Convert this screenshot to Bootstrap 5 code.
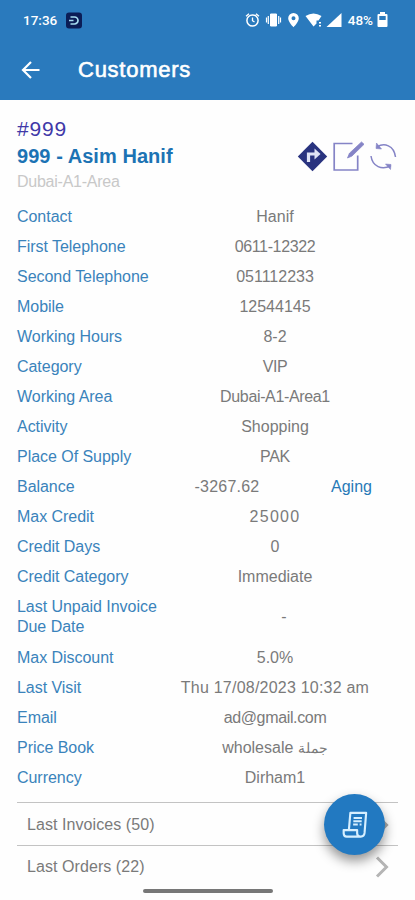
<!DOCTYPE html>
<html lang="en">
<head>
<meta charset="utf-8">
<meta name="viewport" content="width=device-width, initial-scale=1">
<title>Customers</title>
<link href="https://cdn.jsdelivr.net/npm/bootstrap@5.3.0/dist/css/bootstrap.min.css" rel="stylesheet">
<style>
body{font-family:"Liberation Sans",Arial,sans-serif;font-size:16px;color:#7a7a7a;background:#fefefe}
.screen{width:415px;height:900px}
.top{background:#2a7abd;height:100px}
.status{height:40px;font:500 13.5px/40px Roboto,sans-serif;padding:0 27px 0 23px}
.app-title{font-size:22px;line-height:60px;letter-spacing:.75px;-webkit-text-stroke:.6px #fff;margin-left:37px}
.toolbar{height:60px;padding-left:21px}
.head{height:101.6px;padding:16.5px 17px 0}
.num{font-size:21px;line-height:24px;letter-spacing:.8px;color:#4038a8}
.who{font-size:20px;line-height:30px;color:#1c73b4;letter-spacing:.05px}
.area{color:#c8c8c8;line-height:21px;letter-spacing:-.25px}
.actions{padding-top:24px;gap:5px;margin-right:1px}
.line{height:30.05px;padding-left:17px}
.line.tall{height:50.5px;line-height:20.5px}
.key{width:153px;color:#3a83bb;letter-spacing:-.04px}
.val{width:210px}
.wide{letter-spacing:1.3px}
.loose{letter-spacing:.22px}
.tight{letter-spacing:-.35px}
.val.bal{width:114px}
.aging{width:108px;color:#2779b7}
.val.none{width:228px}
.lists{padding-top:9.5px}
.more{border-top:1px solid #c3c3c3;height:42.3px;margin:0 17px;padding:1px 0 0 10px;letter-spacing:.07px}
.fab{left:324px;top:794px;width:61px;height:61px;background:#2279c1;box-shadow:0 6px 12px rgba(0,0,0,.42)}
.pill{left:143px;top:889px;width:130px;height:4px;background:#777}
.chev-under{margin-right:9px}
</style>
<script src="https://cdn.jsdelivr.net/npm/bootstrap@5.3.0/dist/js/bootstrap.bundle.min.js"></script>
</head>
<body>
<div class="screen position-relative overflow-hidden">
<header class="top text-white">
  <div class="status d-flex align-items-center">
    <span>17:36</span>
    <svg class="ms-2" width="17" height="17" viewBox="0 0 17 17"><rect x="1" y=".5" width="16" height="16" rx="3" fill="#0b1d56"/><path d="M4 8.500h4.500M5.500 5h4a3.500 3.500 0 0 1 0 7h-4" fill="none" stroke="#a6dcef" stroke-width="1.700"/></svg>
    <svg class="ms-auto" width="102" height="18" viewBox="0 0 102 18" fill="none" stroke="#fff">
      <circle cx="10.500" cy="9.500" r="5.600" stroke-width="1.500"/><path d="M10.500 6.500v3.200l2 1.300M4 5.200l3-2.500M17 5.200l-3-2.500" stroke-width="1.300"/>
      <path d="M28.500 3h6v12h-6z" fill="#fff"/><path d="M26.300 5v8M36.700 5v8M24.500 6.500v5M38.500 6.500v5" stroke-width="1.200"/>
      <path fill="#fff" fill-rule="evenodd" stroke="none" d="M51.500 2a5.300 5.300 0 0 0-5.300 5.300c0 3.700 5.300 9 5.300 9s5.300-5.300 5.300-9A5.300 5.300 0 0 0 51.500 2m0 3.200a2 2 0 1 1 0 4 2 2 0 0 1 0-4"/>
      <path fill="#fff" stroke="none" d="M63.500 5q8-5 16 0l-3 4.500h-2v3l-3 3z"/><path d="M78 11v1.500M78 14v1.500" stroke-width="2"/>
      <path fill="#fff" stroke="none" d="M99.500 2v14h-15z"/>
    </svg>
    <span class="ms-1">48%</span>
    <svg class="ms-1" width="11" height="16" viewBox="0 0 11 16"><path fill="#fff" fill-rule="evenodd" d="M3 0h5v2h1.500q1 0 1 1v11q0 1-1 1h-8q-1 0-1-1V3q0-1 1-1H3zM2.300 4v4h6.400V4z"/></svg>
  </div>
  <div class="toolbar d-flex align-items-center">
    <svg width="20" height="20" viewBox="0 0 20 20" fill="none" stroke="#fff" stroke-width="2.200"><path d="M18.500 10H2.500M10 2l-8 8 8 8"/></svg>
    <div class="app-title">Customers</div>
  </div>
</header>
<section class="head d-flex justify-content-between">
  <div><div class="num">#999</div><div class="who fw-bold">999 - Asim Hanif</div><div class="area">Dubai-A1-Area</div></div>
  <div class="actions d-flex align-items-start">
    <svg width="31" height="31" viewBox="0 0 31 31"><path d="M15.500.8 30.200 15.500 15.500 30.200.8 15.500z" fill="#29337f"/><path d="M11.500 21v-8h8" fill="none" stroke="#dfe3f5" stroke-width="3.200"/><path d="M17.500 7.500v11l6-5.500z" fill="#dfe3f5"/></svg>
    <svg width="32" height="31" viewBox="0 0 32 31" fill="none" stroke="#8584c6" stroke-width="1.700"><path d="M19.500 2.500H1.200V29h23.500V14.500"/><path d="M14.500 17l2-4.800L28.500 1 31 3.300 19 15z" fill="#8584c6" stroke-width=".8"/></svg>
    <svg width="27" height="31" viewBox="0 0 27 31" fill="none" stroke="#8584c6" stroke-width="1.500"><path d="M7 6C14 1.500 24 4 25.500 16M1 15c1.500 11 11 14 19.500 10"/><path d="M6.500 2 6 7.500l5.500.5zM20.500 28.500l.5-5-5.500-.5z" fill="#8584c6" stroke-width=".6"/></svg>
  </div>
</section>
<main>
  <div class="line d-flex align-items-center"><div class="key">Contact</div><div class="val text-center">Hanif</div></div>
  <div class="line d-flex align-items-center"><div class="key">First Telephone</div><div class="val tight text-center">0611-12322</div></div>
  <div class="line d-flex align-items-center"><div class="key">Second Telephone</div><div class="val text-center">051112233</div></div>
  <div class="line d-flex align-items-center"><div class="key">Mobile</div><div class="val text-center">12544145</div></div>
  <div class="line d-flex align-items-center"><div class="key">Working Hours</div><div class="val text-center">8-2</div></div>
  <div class="line d-flex align-items-center"><div class="key">Category</div><div class="val tight text-center">VIP</div></div>
  <div class="line d-flex align-items-center"><div class="key">Working Area</div><div class="val tight text-center">Dubai-A1-Area1</div></div>
  <div class="line d-flex align-items-center"><div class="key">Activity</div><div class="val text-center">Shopping</div></div>
  <div class="line d-flex align-items-center"><div class="key">Place Of Supply</div><div class="val tight text-center">PAK</div></div>
  <div class="line d-flex align-items-center"><div class="key">Balance</div><div class="val loose bal text-center">-3267.62</div><div class="aging ms-auto ps-4">Aging</div></div>
  <div class="line d-flex align-items-center"><div class="key">Max Credit</div><div class="val wide text-center">25000</div></div>
  <div class="line d-flex align-items-center"><div class="key">Credit Days</div><div class="val text-center">0</div></div>
  <div class="line d-flex align-items-center"><div class="key">Credit Category</div><div class="val text-center">Immediate</div></div>
  <div class="line tall d-flex align-items-center"><div class="key">Last Unpaid Invoice Due Date</div><div class="val none text-center">-</div></div>
  <div class="line d-flex align-items-center"><div class="key">Max Discount</div><div class="val text-center">5.0%</div></div>
  <div class="line d-flex align-items-center"><div class="key">Last Visit</div><div class="val loose text-center">Thu 17/08/2023 10:32 am</div></div>
  <div class="line d-flex align-items-center"><div class="key">Email</div><div class="val tight text-center">ad@gmail.com</div></div>
  <div class="line d-flex align-items-center"><div class="key">Price Book</div><div class="val text-center">wholesale <small>جملة</small></div></div>
  <div class="line d-flex align-items-center"><div class="key">Currency</div><div class="val text-center">Dirham1</div></div>
</main>
<div class="lists">
  <div class="more d-flex align-items-center justify-content-between"><span>Last Invoices (50)</span><svg class="chev-under" width="14" height="22" viewBox="0 0 14 22" fill="none" stroke="#aaa" stroke-width="3"><path d="M2 1.500 11.500 11 2 20.500"/></svg></div>
  <div class="more d-flex align-items-center justify-content-between"><span>Last Orders (22)</span><svg class="chev-under" width="14" height="22" viewBox="0 0 14 22" fill="none" stroke="#b5b5b5" stroke-width="3"><path d="M2 1.500 11.500 11 2 20.500"/></svg></div>
</div>
<div class="fab position-absolute rounded-circle d-flex align-items-center justify-content-center">
  <svg width="26" height="28" viewBox="0 0 28 30" fill="none" stroke="#d6efff" stroke-width="2.300" stroke-linejoin="round"><path d="M7.500 19.500 9 2h17l-1.700 21.500q-.5 4-4 4H5q-3 0-3.200-3.500v-3.500h14.500V24q.2 3.500 3.500 3.500"/><path d="M12.500 7.500h9M12.200 11h9M12 14.500h5M19 14.500h2"/></svg>
</div>
<div class="pill position-absolute rounded-pill"></div>
</div>
</body>
</html>
